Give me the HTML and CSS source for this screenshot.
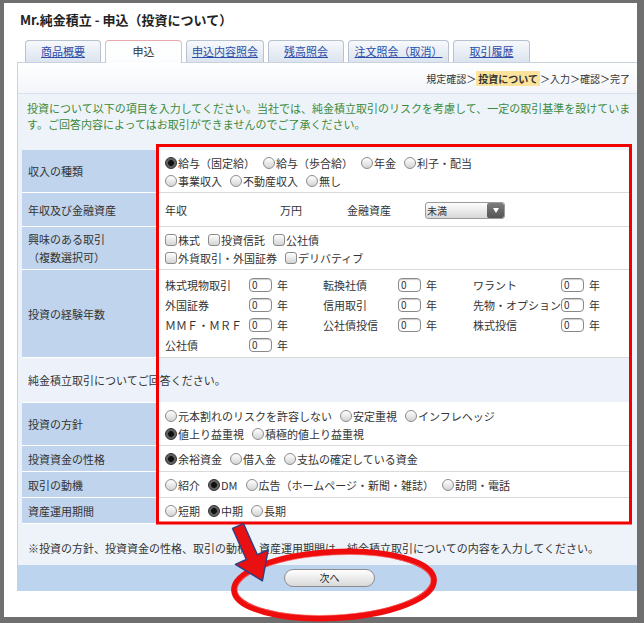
FILE: index.html
```html
<!DOCTYPE html>
<html lang="ja">
<head>
<meta charset="utf-8">
<title>Mr.純金積立 - 申込（投資について）</title>
<link rel="stylesheet" href="styles.css">
</head>
<body>
<div class="page">
  <div class="frame">
    <h1 class="title">Mr.純金積立 - 申込（投資について）</h1>
    <div class="tabs">
      <div class="tab w76"><a href="#">商品概要</a></div>
      <div class="tab w77 active"><span>申込</span></div>
      <div class="tab w78"><a href="#">申込内容照会</a></div>
      <div class="tab w76"><a href="#">残高照会</a></div>
      <div class="tab w101"><a href="#">注文照会（取消）</a></div>
      <div class="tab w77"><a href="#">取引履歴</a></div>
    </div>
    <div class="panel">
      <div class="crumbs">規定確認＞<b>投資について</b>＞入力＞確認＞完了</div>
      <p class="intro">投資について以下の項目を入力してください。当社では、純金積立取引のリスクを考慮して、一定の取引基準を設けていま<br>す。ご回答内容によってはお取引ができませんのでご了承ください。</p>
      <table class="form">
        <tr class="two">
          <th>収入の種類</th>
          <td>
            <div class="line">
              <span class="opt"><i class="radio on"></i>給与（固定給）</span>
              <span class="opt"><i class="radio"></i>給与（歩合給）</span>
              <span class="opt"><i class="radio"></i>年金</span>
              <span class="opt"><i class="radio"></i>利子・配当</span>
            </div>
            <div class="line">
              <span class="opt"><i class="radio"></i>事業収入</span>
              <span class="opt"><i class="radio"></i>不動産収入</span>
              <span class="opt"><i class="radio"></i>無し</span>
            </div>
          </td>
        </tr>
        <tr class="amt-row">
          <th>年収及び金融資産</th>
          <td>
            <div class="amt">
              <span class="amt-a">年収</span>
              <span class="amt-b">万円</span>
              <span class="amt-c">金融資産</span>
              <span class="select"><span class="sel-text">未満</span><span class="sel-btn"><i class="tri"></i></span></span>
            </div>
          </td>
        </tr>
        <tr class="two">
          <th>興味のある取引<br>（複数選択可）</th>
          <td>
            <div class="line">
              <span class="opt"><i class="check"></i>株式</span>
              <span class="opt"><i class="check"></i>投資信託</span>
              <span class="opt"><i class="check"></i>公社債</span>
            </div>
            <div class="line">
              <span class="opt"><i class="check"></i>外貨取引・外国証券</span>
              <span class="opt"><i class="check"></i>デリバティブ</span>
            </div>
          </td>
        </tr>
        <tr class="years-row">
          <th>投資の経験年数</th>
          <td>
            <div class="years">
              <span>株式現物取引</span><span class="num">0</span><span class="unit">年</span>
              <span>転換社債</span><span class="num">0</span><span class="unit">年</span>
              <span>ワラント</span><span class="num">0</span><span class="unit">年</span>
              <span>外国証券</span><span class="num">0</span><span class="unit">年</span>
              <span>信用取引</span><span class="num">0</span><span class="unit">年</span>
              <span>先物・オプション</span><span class="num">0</span><span class="unit">年</span>
              <span>ＭＭＦ・ＭＲＦ</span><span class="num">0</span><span class="unit">年</span>
              <span>公社債投信</span><span class="num">0</span><span class="unit">年</span>
              <span>株式投信</span><span class="num">0</span><span class="unit">年</span>
              <span>公社債</span><span class="num">0</span><span class="unit">年</span>
            </div>
          </td>
        </tr>
        <tr>
          <td class="sub" colspan="2">純金積立取引についてご回答ください。</td>
        </tr>
        <tr class="two">
          <th>投資の方針</th>
          <td>
            <div class="line">
              <span class="opt"><i class="radio"></i>元本割れのリスクを許容しない</span>
              <span class="opt"><i class="radio"></i>安定重視</span>
              <span class="opt"><i class="radio"></i>インフレヘッジ</span>
            </div>
            <div class="line">
              <span class="opt"><i class="radio on"></i>値上り益重視</span>
              <span class="opt"><i class="radio"></i>積極的値上り益重視</span>
            </div>
          </td>
        </tr>
        <tr>
          <th>投資資金の性格</th>
          <td>
            <div class="line">
              <span class="opt"><i class="radio on"></i>余裕資金</span>
              <span class="opt"><i class="radio"></i>借入金</span>
              <span class="opt"><i class="radio"></i>支払の確定している資金</span>
            </div>
          </td>
        </tr>
        <tr>
          <th>取引の動機</th>
          <td>
            <div class="line">
              <span class="opt"><i class="radio"></i>紹介</span>
              <span class="opt"><i class="radio on"></i>DM</span>
              <span class="opt"><i class="radio"></i>広告（ホームページ・新聞・雑誌）</span>
              <span class="opt"><i class="radio"></i>訪問・電話</span>
            </div>
          </td>
        </tr>
        <tr>
          <th>資産運用期間</th>
          <td>
            <div class="line">
              <span class="opt"><i class="radio"></i>短期</span>
              <span class="opt"><i class="radio on"></i>中期</span>
              <span class="opt"><i class="radio"></i>長期</span>
            </div>
          </td>
        </tr>
      </table>
      <p class="note">※投資の方針、投資資金の性格、取引の動機、資産運用期間は、純金積立取引についての内容を入力してください。</p>
      <div class="actions"><button class="next" type="button">次へ</button></div>
    </div>
  </div>
  <svg class="marks" width="644" height="623" viewBox="0 0 644 623" aria-hidden="true">
    <rect x="157.5" y="145.5" width="473" height="377.5" fill="none" stroke="#f20000" stroke-width="3"/>
    <ellipse cx="334" cy="585" rx="100" ry="33" transform="rotate(-3 334 585)" fill="none" stroke="#ee0c0c" stroke-width="6"/>
    <ellipse cx="334" cy="585" rx="97" ry="30" transform="rotate(-3 334 585)" fill="none" stroke="#ff7070" stroke-width="1" opacity="0.6"/>
    <polygon points="-6,0 6,0 6,34 18,34 0,60 -18,34 -6,34" transform="translate(238 526) rotate(-24)" fill="#e81010" stroke="#2b3f86" stroke-width="1.4" stroke-linejoin="round"/>
  </svg>
</div>
</body>
</html>
```

FILE: styles.css
```css
* { box-sizing: border-box; }
html, body { margin: 0; padding: 0; }
body {
  background: #6f6f6f;
  font-family: "Noto Sans CJK JP", "Liberation Sans", sans-serif;
  font-size: 11px;
  color: #333;
  width: 644px;
  height: 623px;
  overflow: hidden;
}
.page {
  position: relative;
  width: 644px;
  height: 623px;
  padding: 3px 7px 6px 4px;
}
.frame {
  background: #fff;
  height: 614px;
  overflow: hidden;
}
.title {
  margin: 0;
  padding: 8px 0 0 16px;
  font-size: 13px;
  line-height: 18px;
  font-weight: bold;
  color: #222;
}
.tabs {
  display: flex;
  gap: 4px;
  margin: 11px 0 0 21px;
  height: 22px;
  position: relative;
  z-index: 1;
}
.tab {
  height: 22px;
  border: 1px solid #b8c2ce;
  border-bottom: none;
  border-radius: 4px 4px 0 0;
  background: linear-gradient(#f7f9fc, #dbe4ef);
  text-align: center;
  line-height: 20px;
  font-size: 11px;
}
.w76 { width: 76px; }
.w77 { width: 77px; }
.w78 { width: 78px; }
.w101 { width: 101px; }
.tab a { color: #2c4ea8; text-decoration: underline; }
.tab.active {
  background: linear-gradient(#fff, #fbfcfd);
  border-color: #d9c0c4;
  border-top-color: #e8a9ad;
  height: 23px;
}
.tab.active span { color: #333; }
.panel {
  margin-left: 13px;
  border: 1px solid #c8d1dc;
  border-right: none;
  border-bottom: none;
  background: #eef3fa;
}
.crumbs {
  height: 31px;
  padding: 9px 7px 0 0;
  text-align: right;
  font-size: 10px;
  line-height: 14px;
  color: #333;
  background: linear-gradient(#fff, #f2f5fa);
  border-bottom: 1px solid #dbe2ec;
}
.crumbs b {
  background: #fbe39c;
  padding: 0 2px;
}
.intro {
  margin: 0;
  padding: 6px 0 0 9px;
  color: #3b8a3b;
  font-size: 11px;
  line-height: 16px;
  white-space: nowrap;
}
.form {
  margin: 18px 0 0 4px;
  width: 610px;
  border-collapse: separate;
  border-spacing: 0;
}
.form th {
  width: 135px;
  background: #c0d5ed;
  text-align: left;
  font-weight: normal;
  padding: 0 6px;
  line-height: 18px;
  border-bottom: 1px solid #fff;
  vertical-align: middle;
  color: #333;
}
.form td {
  background: #fff;
  padding: 4px 8px 3px;
  line-height: 18px;
  border-bottom: 1px solid #dadada;
  vertical-align: middle;
}
.form tr.two td { padding-bottom: 2px; }
.form tr.amt-row td { padding: 8px 8px 7px; }
.form tr.years-row td { padding: 5px 8px 2px; }
.form td.sub {
  background: #edf2fa;
  padding: 13px 6px;
  border-bottom: 1px solid #fff;
}
.line {
  display: flex;
  column-gap: 8px;
  height: 18px;
  align-items: center;
  white-space: nowrap;
}
.opt {
  display: inline-flex;
  align-items: center;
}
.radio, .check {
  display: inline-block;
  width: 12px;
  height: 12px;
  margin-right: 1px;
  border: 1px solid #8c8c8c;
  background: linear-gradient(#fff, #d4d4d4);
  flex: none;
}
.radio { border-radius: 50%; }
.radio.on {
  border-color: #2e2e2e;
  background: radial-gradient(circle, #111 0 2.6px, #5a5a5a 3.2px, #7a7a7a 100%);
}
.check { border-radius: 3px; }
.amt {
  display: flex;
  align-items: center;
  height: 18px;
  white-space: nowrap;
}
.amt-a { width: 115px; }
.amt-b { width: 67px; }
.amt-c { width: 78px; }
.select {
  display: inline-flex;
  align-items: stretch;
  justify-content: space-between;
  width: 80px;
  height: 17px;
  border: 1px solid #9a9a9a;
  border-radius: 3px;
  background: linear-gradient(#fdfdfd, #d8d8d8);
  font-size: 10px;
  line-height: 15px;
  overflow: hidden;
}
.sel-text { padding-left: 1px; }
.sel-btn {
  width: 17px;
  background: linear-gradient(#7d7d7d, #555);
  border-radius: 2px;
  display: flex;
  align-items: center;
  justify-content: center;
}
.tri {
  display: block;
  width: 0;
  height: 0;
  border-left: 3.5px solid transparent;
  border-right: 3.5px solid transparent;
  border-top: 5px solid #fff;
}
.years {
  display: grid;
  grid-template-columns: 84px 23px 51px 75px 23px 52px 88px 23px auto;
  grid-auto-rows: 20px;
  align-items: center;
  white-space: nowrap;
}
.num {
  width: 23px;
  height: 14px;
  border: 1px solid #8a8a8a;
  border-radius: 4px;
  background: #fff;
  font-size: 10px;
  line-height: 12px;
  padding-left: 2px;
  box-shadow: inset 0 1px 1px rgba(0,0,0,.2);
}
.unit { padding-left: 5px; }
.note {
  margin: 0;
  padding: 15px 0 8px 10px;
  line-height: 18px;
  white-space: nowrap;
}
.actions {
  background: #bcd4ee;
  height: 26px;
  padding: 4px 0 0 4px;
  display: flex;
  justify-content: center;
}
.next {
  width: 91px;
  height: 18px;
  border: 1px solid #8d8d8d;
  border-radius: 9px;
  background: linear-gradient(#fff, #d9d9d9);
  font-family: inherit;
  font-size: 10px;
  line-height: 16px;
  color: #222;
  padding: 0;
}
.marks {
  position: absolute;
  left: 0;
  top: 0;
  pointer-events: none;
}
```
